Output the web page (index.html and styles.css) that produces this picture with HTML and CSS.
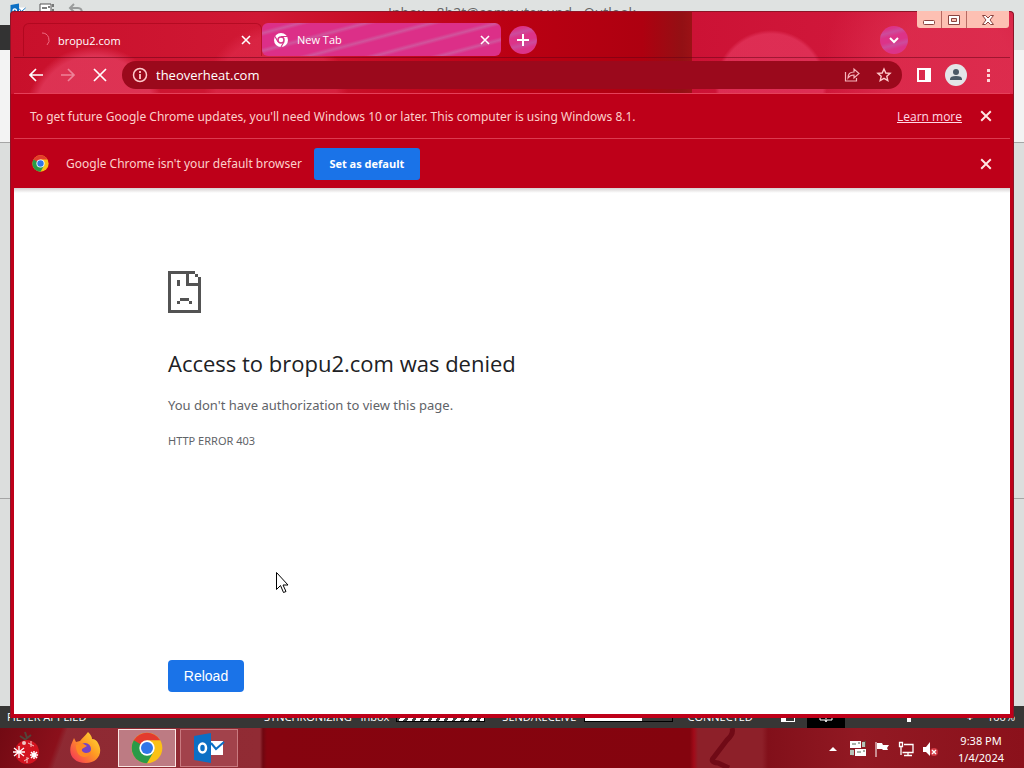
FILE: index.html
```
<!DOCTYPE html>
<html lang="en">
  <head>
    <meta charset="utf-8">
    <meta name="viewport" content="width=device-width, initial-scale=1.0">
    <title>bropu2.com</title>
    <link rel="stylesheet" href="styles.css">
  </head>
  <body>
    <!-- shared icons -->
    <svg class="defs" width="0" height="0">
      <symbol id="close" viewBox="0 0 10 10">
        <path d="M1 1l8 8M9 1L1 9" fill="none" stroke="currentColor" stroke-width="1.600"/>
      </symbol>
      <symbol id="chrome" viewBox="0 0 48 48">
        <circle cx="24" cy="24" r="23" fill="#fbc116"/>
        <path d="M4.1 12.5A23 23 0 0 1 43.9 12.5H24L14 29.8z" fill="#e33b2e"/>
        <path d="M4.1 12.500A23 23 0 0 0 24 47L34 29.800 24 24z" fill="#2a9a48"/>
        <circle cx="24" cy="24" r="11.500" fill="#fff"/>
        <circle cx="24" cy="24" r="9" fill="#2f76e8"/>
      </symbol>
      <symbol id="outlook" viewBox="0 0 32 32">
        <path d="M18 9h12v14H18z" fill="#fff"/>
        <path d="M18 11l5 6 8-7" fill="none" stroke="#0c6fc4" stroke-width="2"/>
        <path d="M1 4l17-3v30L1 28z" fill="#0c6fc4"/>
        <ellipse cx="9.500" cy="16" rx="3.500" ry="4.500" fill="none" stroke="#fff" stroke-width="2.500"/>
      </symbol>
    </svg>

    <div class="desktop">
      <div class="outlook">
        <div class="outlook-title">
          <div class="quick">
            <svg width="16" height="16"><use href="#outlook"/></svg>
            <svg width="16" height="14" viewBox="0 0 16 14"><path d="M1 1h11v9H1z" fill="#fff" stroke="#555"/><path d="M3 5h5M9 4h2M14 1v3M14 6v3" stroke="#555" stroke-width="1.500"/></svg>
            <svg width="16" height="14" viewBox="0 0 16 14"><path d="M6 1L2 5l4 4M2 5h8q4 0 4 5" fill="none" stroke="#9a9c9c" stroke-width="2"/></svg>
          </div>
          <span>Inbox - 8b2t@computer.und - Outlook</span>
        </div>
        <div class="outlook-tabs"></div>
        <div class="outlook-ribbon"></div>
        <div class="outlook-list"></div>
        <div class="outlook-body"></div>
        <div class="status">
          <span class="filter">FILTER APPLIED</span>
          <span>SYNCHRONIZING &nbsp; Inbox</span>
          <span class="bar striped"></span>
          <span class="send">SEND/RECEIVE</span>
          <span class="bar half"></span>
          <span class="connected">CONNECTED</span>
          <span class="view"></span>
          <span class="view book"><svg width="14" height="12" viewBox="0 0 14 12"><path d="M1 1h5l1 1 1-1h5v8H8l-1 2-1-2H1zM7 2v8" fill="none" stroke="#fff"/></svg></span>
          <span class="slider"><i></i><b>+</b></span>
          <span>100%</span>
        </div>
      </div>

      <div class="window">
        <div class="controls">
          <button aria-label="Minimize"><svg width="14" height="12" viewBox="0 0 14 12"><rect x="1.500" y="6.500" width="11" height="4" rx="1" fill="#fff" stroke="#8a4440"/></svg></button>
          <button aria-label="Maximize"><svg width="14" height="12" viewBox="0 0 14 12"><path d="M1.500 1.500h11v9h-11z" fill="#fff" stroke="#8a4440"/><path d="M4.500 4.500h5v3h-5z" fill="#fdc0b3" stroke="#8a4440"/></svg></button>
          <button class="wide" aria-label="Close window"><svg width="14" height="12" viewBox="0 0 14 12"><path d="M1.500 1.500h3L7 4l2.500-2.500h3L9 6l3.500 4.500h-3L7 8l-2.500 2.500h-3L5 6z" fill="#fff" stroke="#8a4440"/></svg></button>
        </div>

        <div class="header">
          <div class="tabs">
            <div class="tab active">
              <svg width="16" height="16" viewBox="0 0 16 16"><path d="M8 1a7 7 0 0 1 5 12" fill="none" stroke="#ee6a80"/></svg>
              <span>bropu2.com</span>
              <button aria-label="Close tab"><svg width="10" height="10"><use href="#close"/></svg></button>
            </div>
            <div class="tab">
              <svg width="16" height="16" viewBox="0 0 16 16"><circle cx="8" cy="8" r="7" fill="#fff"/><circle cx="8" cy="8" r="3" fill="#fff" stroke="#d8368a" stroke-width="1.500"/><path d="M8 4.500h6.500M5 9.700L2 4.500M11 9.700L8 15" stroke="#d8368a" stroke-width="1.200"/></svg>
              <span>New Tab</span>
              <button aria-label="Close tab"><svg width="10" height="10"><use href="#close"/></svg></button>
            </div>
            <button class="round" aria-label="New tab"><svg width="14" height="14" viewBox="0 0 14 14"><path d="M7 1v12M1 7h12" stroke="#fff" stroke-width="2"/></svg></button>
            <button class="round search" aria-label="Search tabs"><svg width="12" height="12" viewBox="0 0 12 12"><path d="M2 4l4 4 4-4" fill="none" stroke="#fff" stroke-width="2"/></svg></button>
          </div>

          <div class="toolbar">
            <button aria-label="Back"><svg width="16" height="16" viewBox="0 0 16 16"><path d="M15 8H2M8 2L2 8l6 6" fill="none" stroke="#fff" stroke-width="1.700"/></svg></button>
            <button aria-label="Forward"><svg width="16" height="16" viewBox="0 0 16 16"><path d="M1 8h13M8 2l6 6-6 6" fill="none" stroke="#ee8298" stroke-width="1.700"/></svg></button>
            <button aria-label="Stop"><svg width="16" height="16" viewBox="0 0 16 16"><path d="M2 2l12 12M14 2L2 14" stroke="#fff" stroke-width="1.700"/></svg></button>
            <div class="address">
              <svg width="16" height="16" viewBox="0 0 16 16"><circle cx="8" cy="8" r="6.500" fill="none" stroke="#ffc9cb" stroke-width="1.500"/><path d="M8 7v5M8 4v2" stroke="#ffc9cb" stroke-width="1.800"/></svg>
              <input type="text" aria-label="Address" value="theoverheat.com">
              <button aria-label="Share"><svg width="16" height="16" viewBox="0 0 16 16"><path d="M1.500 5v9h11v-3M4 11q0-6 6-6V2l5 4.500L10 11V8q-4 0-6 3z" fill="none" stroke="#f7b5bc" stroke-width="1.200"/></svg></button>
              <button aria-label="Bookmark"><svg width="16" height="16" viewBox="0 0 16 16"><path d="M8 2l1.800 4 4.300.4-3.300 2.900 1 4.300L8 11.300l-3.800 2.300 1-4.300L1.900 6.400 6.200 6z" fill="none" stroke="#ffc9cb" stroke-width="1.400"/></svg></button>
            </div>
            <button aria-label="Side panel"><svg width="16" height="16" viewBox="0 0 16 16"><path d="M2 2h12v12H2z" fill="none" stroke="#fff" stroke-width="2"/><path d="M9 2h5v12H9z" fill="#fff"/></svg></button>
            <button class="profile" aria-label="Profile"><svg width="22" height="22" viewBox="0 0 22 22"><circle cx="11" cy="11" r="11" fill="#e3e5e8"/><circle cx="11" cy="8" r="3" fill="#4a5866"/><path d="M5 16v-1q0-3 6-3t6 3v1z" fill="#4a5866"/></svg></button>
            <button aria-label="Menu"><svg width="16" height="16" viewBox="0 0 16 16"><path d="M7 2h3v3H7zM7 7h3v3H7zM7 12h3v3H7z" fill="#ffd5d8"/></svg></button>
          </div>
        </div>

        <div class="infobar">
          <p>To get future Google Chrome updates, you'll need Windows 10 or later. This computer is using Windows 8.1.</p>
          <a href="#">Learn more</a>
          <button class="x" aria-label="Dismiss"><svg width="12" height="12"><use href="#close"/></svg></button>
        </div>
        <div class="infobar default">
          <svg class="logo" width="17" height="17"><use href="#chrome"/></svg>
          <p>Google Chrome isn't your default browser</p>
          <button class="primary">Set as default</button>
          <button class="x" aria-label="Dismiss"><svg width="12" height="12"><use href="#close"/></svg></button>
        </div>

        <div class="page">
          <div class="error">
            <svg width="33" height="42" viewBox="0 0 11 14" shape-rendering="crispEdges"><path d="M0 0h9v1H1v12h9V5H6V1h1v3h3V2h1v12H0zM9 1h1v1H9zM3 3h1v2H3zM4 9h3v1H4zM3 10h1v1H3zM7 10h1v1H7z" fill="#535353"/></svg>
            <h1>Access to bropu2.com was denied</h1>
            <p>You don't have authorization to view this page.</p>
            <p class="code">HTTP ERROR 403</p>
            <button class="reload">Reload</button>
          </div>
        </div>
      </div>

      <div class="taskbar">
        <svg class="ribbon" width="40" height="40" viewBox="0 0 40 40"><path d="M28 0q2 6-5 12L10 29q-5 5 4 6l11 5" fill="none" stroke="#700a16" stroke-width="5"/></svg>
        <button class="app start" aria-label="Start">
          <svg width="30" height="34" viewBox="0 0 30 34">
            <path d="M14 1l2 6M9 5l6 4M20 4l-5 4" stroke="#53443a" stroke-width="2"/>
            <circle cx="16" cy="21" r="12" fill="#d31420"/>
            <circle cx="13" cy="12" r="2" fill="#f0c8c4"/>
            <path d="M3 17l10 8M8 15v12M3 25l10-8M2 21h12" stroke="#fff" stroke-width="1.300"/>
            <path d="M19 24h8M23 20v8M20 21l6 6M26 21l-6 6" stroke="#fff" stroke-width="1.500"/>
            <path d="M17 12l6 3M20 10v6M13 30l5-3M16 26v6" stroke="#f3c5c5"/>
          </svg>
        </button>
        <button class="app" aria-label="Firefox">
          <svg width="32" height="32" viewBox="0 0 32 32">
            <defs><linearGradient id="fox" x1="1" y1="0" x2="0" y2="1"><stop offset="0" stop-color="#ffe53b"/><stop offset=".45" stop-color="#ff9a22"/><stop offset="1" stop-color="#f5275f"/></linearGradient></defs>
            <path d="M19 0c3 3 4 5 4 7 3 0 5 2 6 4 6 10-1 20-12 20C5 31-1 23 2 13L5 6l2 4 4-1c2-3 5-5 8-9z" fill="url(#fox)"/>
            <circle cx="16" cy="17" r="6" fill="#7543c5"/>
            <path d="M7 13l6-2 5 3-5 3q-1 3 4 4 3 0 5-2 0 5-6 6-9 0-9-12z" fill="#ff8a24"/>
          </svg>
        </button>
        <button class="app open current" aria-label="Google Chrome"><svg width="32" height="32"><use href="#chrome"/></svg></button>
        <button class="app open" aria-label="Outlook"><svg width="32" height="32"><use href="#outlook"/></svg></button>

        <div class="tray">
          <svg class="arrow" width="8" height="16" viewBox="0 0 8 16"><path d="M0 10l4-4 4 4z" fill="#fff"/></svg>
          <svg width="16" height="16" viewBox="0 0 16 16"><path d="M0 0h11v7H0zM5 8h11v7H5z" fill="#fff"/><path d="M2 3h4M8 2h2M7 11h4M13 10h2M13 0h3v6M0 9h3v6" fill="none" stroke="#526654"/><path d="M12 1h3v5h-3zM0 9h4v5H0z" fill="#b6c3b8"/></svg>
          <svg width="16" height="16" viewBox="0 0 16 16"><path d="M2 1v15" stroke="#fff"/><path d="M3 2h5l1 2h6l-2 3 1 2H9L8 8H3z" fill="#fff"/></svg>
          <svg width="16" height="16" viewBox="0 0 16 16"><path d="M6 3.500h9v8H4.500M10 12v3M6 14.500h8M1.500 1.500h3v4h-3zM3 6v8" fill="none" stroke="#fff" stroke-width="1.300"/></svg>
          <svg width="16" height="16" viewBox="0 0 16 16"><path d="M1 6h3l4-5v14l-4-4H1z" fill="#fff"/><circle cx="12" cy="11" r="4" fill="#d23943"/><path d="M10 9l4 4M14 9l-4 4" stroke="#fff" stroke-width="1.300"/></svg>
          <div class="clock"><span>9:38 PM</span><span>1/4/2024</span></div>
        </div>
      </div>

      <svg class="cursor" width="13" height="22" viewBox="0 0 13 22"><path d="M.5.500v17l4-4 3 7 2.500-1-3-6.500h5z" fill="#fff" stroke="#000"/></svg>
    </div>
  </body>
</html>
```
FILE: styles.css
```
* {
  box-sizing: border-box;
  padding: 0;
  margin: 0;
}
body {
  font-family: "Open Sans", "Noto Sans", sans-serif;
  font-size: 12px;
}
button {
  border: 0;
  background: none;
  color: inherit;
  font: inherit;
}
svg {
  display: block;
  flex: none;
}
.defs {
  position: absolute;
}
.desktop {
  position: relative;
  display: flex;
  flex-direction: column;
  height: 100vh;
  overflow: hidden;
}

/* outlook, behind the browser */
.outlook {
  flex: 1;
  display: flex;
  flex-direction: column;
  background-color: #dcdedd;
}
.outlook-title {
  display: flex;
  justify-content: center;
  height: 25px;
  padding-top: 4px;
  background-color: #dfe2e1;
  color: #666;
  font-size: 14px;
  line-height: 18px;
}
.quick {
  position: absolute;
  left: 10px;
  top: 3px;
  display: flex;
  gap: 13px;
}
.outlook-tabs {
  height: 25px;
  background: linear-gradient(to right, #333 50%, #dfe2e1 50%);
}
.outlook-ribbon {
  height: 93px;
  background-color: #f3f3f3;
  border-bottom: 1px solid #a5a5a5;
}
.outlook-list {
  flex: 1;
  border-bottom: 1px solid #a5a5a5;
}
.outlook-body {
  height: 207px;
}
.status {
  display: flex;
  align-items: center;
  height: 22px;
  padding: 0 9px 0 7px;
  background-color: #373635;
  color: #fff;
  font-size: 11px;
  line-height: 22px;
  white-space: nowrap;
}
.filter {
  width: 257px;
}
.bar {
  width: 89px;
  height: 10px;
  margin-left: 7px;
  border: 1px solid #000;
}
.striped {
  background: repeating-linear-gradient(-60deg, #fff 0 4px, #444 4px 7px);
}
.half {
  background: linear-gradient(to right, #fff 66%, #3a3938 66%);
}
.send {
  margin-left: 17px;
}
.connected {
  margin-left: 15px;
}
.view {
  width: 14px;
  height: 10px;
  margin-left: auto;
  border: 1px solid #fff;
  border-left-width: 5px;
}
.book {
  display: flex;
  justify-content: center;
  align-items: center;
  width: 38px;
  height: 22px;
  margin-left: 12px;
  border: 0;
  background-color: #000;
}
.slider {
  display: flex;
  justify-content: space-between;
  align-items: center;
  width: 66px;
  margin: 0 14px 0 62px;
}
.slider i {
  width: 4px;
  height: 10px;
  background-color: #fff;
}

/* browser window */
.window {
  position: absolute;
  top: 11px;
  right: 10px;
  bottom: 50px;
  left: 10px;
  display: flex;
  flex-direction: column;
  padding: 0 3px 4px;
  border: 1px solid #8d1527;
  border-bottom: 0;
  border-radius: 4px 4px 0 0;
  background-color: #be0019;
  background-image:
    radial-gradient(circle at 84px 104px, rgba(229, 64, 99, 0.7) 60px, transparent 70px),
    radial-gradient(circle at 265px 84px, rgba(226, 48, 82, 0.5) 60px, transparent 72px),
    radial-gradient(circle at right 242px top 74px, rgba(232, 62, 102, 0.6) 52px, transparent 56px),
    radial-gradient(circle at right 60px top 60px, rgba(226, 53, 86, 0.6) 60px, transparent 130px),
    linear-gradient(to right, #c8102b 0, #d01834 25%, #c50a22 38%, #ba0013 50%, #ae0010 63%, #931014 67%, #9c1216 68%, #cc1235 68%, #d41d40 100%);
  background-size: 100% 82px;
  background-repeat: no-repeat;
}
.controls {
  position: absolute;
  top: -1px;
  right: 4px;
  display: flex;
  border-radius: 0 0 3px 3px;
  background-color: #fdc0b3;
}
.controls button {
  display: flex;
  justify-content: center;
  align-items: center;
  width: 25px;
  height: 17px;
  border-right: 1px solid #b66a63;
}
.controls .wide {
  width: 42px;
  border-right: 0;
}
.header {
  height: 82px;
  border-bottom: 1px solid #e5405a;
  color: #fff;
}
.tabs {
  display: flex;
  height: 45px;
  padding: 11px 102px 0 9px;
}
.tab {
  display: flex;
  align-items: center;
  width: 239px;
  height: 33px;
  padding: 0 11px;
  border-radius: 6px;
  background:
    repeating-linear-gradient(165deg, transparent 0 7px, rgba(200, 110, 170, 0.6) 10px, transparent 13px 17px),
    #dc2f88;
  font-size: 11px;
}
.tab.active {
  padding: 0 10px;
  border: 1px solid rgba(155, 0, 20, 0.5);
  border-bottom: 0;
  border-radius: 6px 6px 0 0;
  background: none;
}
.tab span {
  flex: 1;
  margin-left: 8px;
}
.round {
  display: flex;
  justify-content: center;
  align-items: center;
  width: 28px;
  height: 28px;
  margin: 3px 0 0 8px;
  border-radius: 50%;
  background: repeating-linear-gradient(165deg, #dc3388 0 5px, #cc4c9c 9px, #dc3388 13px);
}
.search {
  margin-left: auto;
}
.toolbar {
  display: flex;
  align-items: center;
  gap: 16px;
  height: 36px;
  padding: 0 14px 2px;
  border-top: 1px solid rgba(100, 0, 20, 0.5);
}
.profile {
  margin: 0 -3px;
}
.address {
  flex: 1;
  display: flex;
  align-items: center;
  gap: 16px;
  height: 28px;
  margin: 0 -2px;
  padding: 0 10px;
  border-radius: 14px;
  background-color: #9b091c;
}
.address input {
  flex: 1;
  min-width: 0;
  margin-left: -8px;
  border: 0;
  outline: 0;
  background: none;
  color: #fff;
  font: inherit;
  font-size: 13px;
}
.infobar {
  display: flex;
  align-items: center;
  height: 45px;
  padding: 0 18px 0 16px;
  border-bottom: 1px solid #dc3b50;
  background-color: #be0019;
  color: #fcd0cb;
}
.infobar p {
  font-family: "Noto Sans", "Open Sans", sans-serif;
}
.infobar a {
  margin-left: auto;
  color: #ffd9e6;
}
.default {
  height: 49px;
  padding-left: 18px;
  border-bottom: 0;
}
.logo {
  margin-right: 17px;
}
.x {
  margin-left: 18px;
  color: #ffe6e3;
}
.default .x {
  margin-left: auto;
}
.primary {
  width: 106px;
  height: 32px;
  margin-left: 12px;
  border-radius: 3px;
  background-color: #1a73e8;
  color: #fff;
  font-size: 11px;
  font-weight: bold;
}
.page {
  flex: 1;
  background: linear-gradient(#d5d0d0, #fff 5px);
}
.error {
  display: flex;
  flex-direction: column;
  align-items: flex-start;
  max-width: 688px;
  height: 100%;
  margin: 0 auto;
  padding: 83px 0 22px;
  color: #5f6368;
}
.error p {
  font-family: "Noto Sans", "Open Sans", sans-serif;
  font-size: 13px;
  line-height: 20px;
}
.error h1 {
  margin: 35px 0 17px;
  color: #202124;
  font-size: 22px;
  font-weight: 500;
  line-height: 30px;
}
.error .code {
  margin-top: 16px;
  font-size: 11px;
}
.reload {
  width: 76px;
  height: 32px;
  margin-top: auto;
  border-radius: 4px;
  background-color: #1a73e8;
  color: #fff;
  font-family: "Liberation Sans", Arial, sans-serif;
  font-size: 14px;
}

.taskbar {
  position: relative;
  display: flex;
  gap: 4px;
  height: 40px;
  background:
    linear-gradient(110deg, #720a13 0, #8b101b 58px, transparent 64px),
    linear-gradient(to right, #8d2932 0, #912b34 260px, #700710 263px, #86040f 267px, #84040e 690px, #a10b19 694px, #8d2029 698px, #8d2029 762px, #82101a 768px, #921923 860px, #8b111b 100%);
}
.ribbon {
  position: absolute;
  right: 280px;
  top: 0;
}
.app {
  display: flex;
  justify-content: center;
  align-items: center;
  width: 58px;
  height: 38px;
  margin-top: 1px;
}
.start {
  width: 52px;
}
.open {
  border: 1px solid #c97a80;
  background-color: #a2424b;
}
.current {
  border-color: #fbe6e4;
  background-color: #bd7b83;
}
.tray {
  display: flex;
  align-items: center;
  gap: 8px;
  margin-left: auto;
  padding: 2px 20px 0 0;
  color: #fff;
}
.arrow {
  margin-right: 5px;
}
.clock {
  display: flex;
  flex-direction: column;
  align-items: center;
  margin-left: 12px;
  font-family: "Noto Sans", "Open Sans", sans-serif;
  font-size: 11px;
  line-height: 17px;
}
.cursor {
  position: absolute;
  left: 276px;
  top: 572px;
}
```
